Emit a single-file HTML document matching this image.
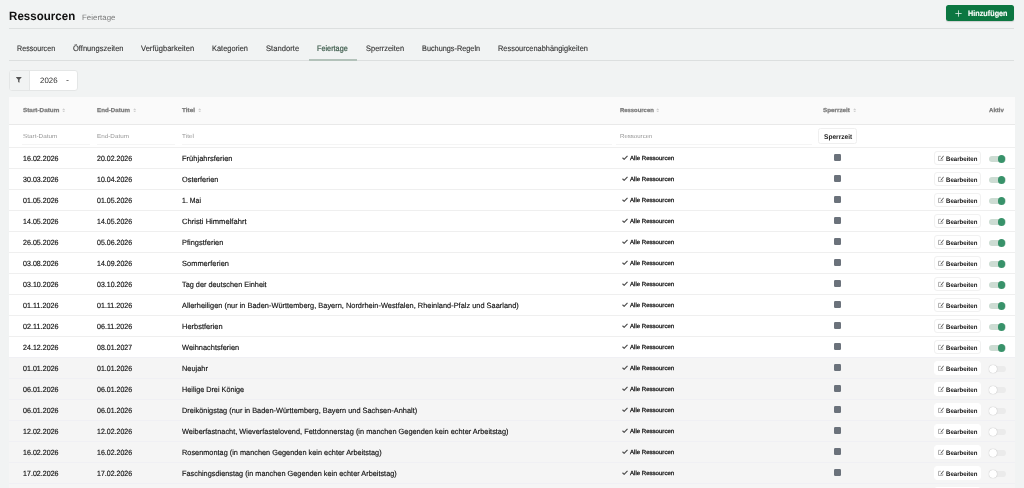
<!DOCTYPE html>
<html lang="de"><head><meta charset="utf-8"><title>Ressourcen</title>
<style>
*{box-sizing:border-box;margin:0;padding:0}
html,body{width:1024px;height:488px;overflow:hidden;background:#f1f3f3;font-family:"Liberation Sans",sans-serif;color:#111}
body{position:relative}
.hd,.btn,.tabs,.filter,.card{will-change:transform}
.x{position:absolute;display:inline-block;white-space:nowrap;transform-origin:0 50%}
.hd{position:absolute;left:0;top:0;width:400px;height:28px}
.title{top:5px;font-size:12px;font-weight:bold;line-height:21.2px;color:#111}
.sub{top:10px;font-size:7.7px;line-height:16px;color:#7a7a7a}
.btn{position:absolute;left:946px;top:5px;width:68px;height:16px;background:#0c7741;border-radius:2.5px;color:#fff;box-shadow:0 1px 1px rgba(0,0,0,.15)}
.btn svg{position:absolute;left:9.2px;top:5px;width:7px;height:7px}
.btn .bt{top:0;font-size:8px;font-weight:bold;line-height:17.8px;color:#fff;-webkit-text-stroke:0.15px #fff}
.hr{position:absolute;left:9px;width:1005px;height:1px;background:#dcdfdf}
.tabs{position:absolute;left:0;top:36px;width:1024px;height:26px;z-index:2}
.tabs .tab{top:0;line-height:26.4px;font-size:8px;color:#333;-webkit-text-stroke:0.12px #333}
.tabs .act{color:#3b5a4a;-webkit-text-stroke:0.2px #3b5a4a}
.tabs .ul{position:absolute;top:22.9px;left:309px;width:47.8px;height:2.3px;background:#b3c2ba}
.filter{position:absolute;left:9px;top:70px;width:68.6px;height:20.6px;border:1px solid #e4e6e6;border-radius:3px;background:#fff;overflow:hidden}
.filter .f{position:absolute;left:0;top:0;width:20px;height:19px;background:#f1f3f3;border-right:1px solid #e4e6e6}
.filter .f svg{position:absolute;left:5.4px;top:4.7px;width:7.6px;height:7.6px}
.filter .y{top:0;line-height:19.4px;font-size:7.8px;color:#333}
.filter .c{position:absolute;left:56.4px;top:8.5px;width:3px;height:1.7px}
.card{position:absolute;left:9px;top:96.7px;width:1005.7px;height:400px;background:#fff}
.th{position:absolute;left:0;top:0;width:100%;height:28px;background:#fafafa;border-bottom:1px solid #e9e9e9;font-size:5.8px;font-weight:bold;color:#7a7a7a}
.th .x{top:0;line-height:27.5px;-webkit-text-stroke:0.25px #7a7a7a}
.th i{position:absolute;top:10.6px;width:3.4px;height:4.6px}
.th i svg{display:block;width:3.4px;height:4.6px}
.fr{position:absolute;left:0;top:28px;width:100%;height:22px;font-size:5.8px;color:#969696}
.fr .x{top:0;line-height:23.7px}
.fr .ln{position:absolute;top:19px;height:1px;background:#f5f5f5}
.fr .sp{position:absolute;left:809.2px;top:3.2px;width:38.6px;height:15.6px;border:1px solid #efefef;border-radius:2.5px;font-size:6.8px;font-weight:bold;color:#1c1c1c;background:#fff}
.fr .sp .x{top:0;line-height:16px}
.row{position:absolute;left:0;width:100%;height:21px;border-top:1px solid #efefef;font-size:7.6px;color:#111}
.row.off{background:#f5f5f5;border-top-color:#f0f0f4}
.row span{position:absolute;white-space:nowrap}
.row .a,.row .b,.row .t{top:0;line-height:21.3px;-webkit-text-stroke:0.15px #111}
.row .r{left:612.5px;top:6.5px;width:6px;height:5px}
.row .r svg{display:block;width:6px;height:5px}
.row .rt{top:0;line-height:20.1px;font-size:5.9px;color:#111;-webkit-text-stroke:0.25px #111}
.row .sq{left:825.2px;top:6.3px;width:6.8px;height:6.8px;background:#6b727b;border-radius:1.2px}
.row .e{left:925px;top:3.3px;width:47.4px;height:14.2px;border:1px solid #f1f1f1;border-radius:3px;background:#fff}
.row.off .e{border-color:#fff}
.row .e svg{position:absolute;left:2.8px;top:2.8px;width:6.2px;height:6.2px}
.row .et{top:0;line-height:13.1px;font-size:6.4px;font-weight:bold;color:#111}
.row .tg{left:980px;top:7.5px;width:16.5px;height:6.5px;border-radius:4px;background:#cddcd3}
.row .tg b{position:absolute;left:8.6px;top:-0.7px;width:7.9px;height:7.9px;border-radius:50%;background:#38926a}
.row.off .tg{background:#ebebeb}
.row.off .tg b{left:0.2px;background:#fff;box-shadow:0 0 1px rgba(0,0,0,.35)}

</style></head><body>
<div class="hd"><span class="x title" style="left:9px;transform:translateY(0.6px) scaleX(0.9633) skewX(0.5deg)">Ressourcen</span><span class="x sub" style="left:82px;transform:scaleX(1.0288) skewX(0.5deg)">Feiertage</span></div>
<div class="btn"><svg viewBox="0 0 8 8"><path d="M4 0.4V7.6M0.4 4H7.6" stroke="#e6f2ea" stroke-width="0.9" fill="none"/></svg><span class="x bt" style="left:21.600000000000023px;transform:scaleX(0.9077) skewX(0.5deg)">Hinzufügen</span></div>
<div class="hr" style="top:28px"></div>
<div class="tabs"><span class="x tab" style="left:17px;transform:scaleX(0.8932) skewX(0.5deg)">Ressourcen</span><span class="x tab" style="left:73px;transform:scaleX(0.9414) skewX(0.5deg)">Öffnungszeiten</span><span class="x tab" style="left:141px;transform:scaleX(0.9479) skewX(0.5deg)">Verfügbarkeiten</span><span class="x tab" style="left:212px;transform:scaleX(0.9283) skewX(0.5deg)">Kategorien</span><span class="x tab" style="left:266px;transform:scaleX(0.9545) skewX(0.5deg)">Standorte</span><span class="x tab act" style="left:317.4px;transform:scaleX(0.9092) skewX(0.5deg)">Feiertage</span><span class="x tab" style="left:366px;transform:scaleX(0.9317) skewX(0.5deg)">Sperrzeiten</span><span class="x tab" style="left:422px;transform:scaleX(0.9138) skewX(0.5deg)">Buchungs-Regeln</span><span class="x tab" style="left:498px;transform:scaleX(0.9274) skewX(0.5deg)">Ressourcenabhängigkeiten</span><div class="ul"></div></div>
<div class="hr" style="top:60px"></div>
<div class="filter"><div class="f"><svg viewBox="0 0 10 10"><path d="M1 1.2H9L5.9 4.8V9L4.1 7.9V4.8Z" fill="#555"/></svg></div><span class="x y" style="left:29.5px;transform:scaleX(1.0150) skewX(0.5deg)">2026</span><svg class="c" viewBox="0 0 6 3.4" preserveAspectRatio="none"><path d="M0 0H6L3 3.4Z" fill="#777"/></svg></div>
<div class="card">
<div class="th"><span class="x " style="left:13.600000000000001px;transform:scaleX(1.0951) skewX(0.5deg)">Start-Datum</span><i style="left:52.6px"><svg viewBox="0 0 34 46" preserveAspectRatio="none"><path d="M17 2L32 19H2Z M17 44L32 27H2Z" fill="#cfcfcf"/></svg></i><span class="x " style="left:88px;transform:scaleX(1.0654) skewX(0.5deg)">End-Datum</span><i style="left:123.6px"><svg viewBox="0 0 34 46" preserveAspectRatio="none"><path d="M17 2L32 19H2Z M17 44L32 27H2Z" fill="#cfcfcf"/></svg></i><span class="x " style="left:173px;transform:scaleX(1.0957) skewX(0.5deg)">Titel</span><i style="left:188.6px"><svg viewBox="0 0 34 46" preserveAspectRatio="none"><path d="M17 2L32 19H2Z M17 44L32 27H2Z" fill="#cfcfcf"/></svg></i><span class="x " style="left:611px;transform:scaleX(1.0169) skewX(0.5deg)">Ressourcen</span><i style="left:647.4px"><svg viewBox="0 0 34 46" preserveAspectRatio="none"><path d="M17 2L32 19H2Z M17 44L32 27H2Z" fill="#cfcfcf"/></svg></i><span class="x " style="left:814px;transform:scaleX(1.0859) skewX(0.5deg)">Sperrzeit</span><i style="left:843.6px"><svg viewBox="0 0 34 46" preserveAspectRatio="none"><path d="M17 2L32 19H2Z M17 44L32 27H2Z" fill="#cfcfcf"/></svg></i><span class="x " style="left:980px;transform:scaleX(1.0534) skewX(0.5deg)">Aktiv</span></div>
<div class="fr"><span class="x " style="left:13.600000000000001px;transform:scaleX(1.0990) skewX(0.5deg)">Start-Datum</span><span class="x " style="left:88px;transform:scaleX(1.0892) skewX(0.5deg)">End-Datum</span><span class="x " style="left:173px;transform:scaleX(1.1109) skewX(0.5deg)">Titel</span><span class="x " style="left:611px;transform:scaleX(1.0487) skewX(0.5deg)">Ressourcen</span><div class="ln" style="left:13px;width:68px"></div><div class="ln" style="left:88px;width:78px"></div><div class="ln" style="left:173px;width:430px"></div><div class="ln" style="left:607px;width:196px"></div><div class="sp"><span class="x " style="left:4.599999999999909px;transform:scaleX(0.9672) skewX(0.5deg)">Sperrzeit</span></div></div>
<div class="row" style="top:50px"><span class="x a" style="left:13.600000000000001px;transform:scaleX(0.9345) skewX(0.5deg)">16.02.2026</span><span class="x b" style="left:88px;transform:scaleX(0.9240) skewX(0.5deg)">20.02.2026</span><span class="x t" style="left:173px;transform:scaleX(0.9891) skewX(0.5deg)">Frühjahrsferien</span><span class="r"><svg viewBox="0 0 12 10"><path d="M1 5.5 L4.3 8.6 L11 1.6" fill="none" stroke="#4a4a4a" stroke-width="2.3"/></svg></span><span class="x rt" style="left:621px;transform:scaleX(1.0289) skewX(0.5deg)">Alle Ressourcen</span><span class="sq"></span><span class="e"><svg viewBox="0 0 12 12"><path d="M9.2 7V10.8H1V2.6H5.6" fill="none" stroke="#8a8a8a" stroke-width="1.3"/><path d="M11 1.4L6 7.6" fill="none" stroke="#505050" stroke-width="1.9"/><path d="M6.4 6.2L4.6 9.2L7.6 7.6Z" fill="#505050"/></svg><span class="x et" style="left:10.700000000000045px;transform:scaleX(0.9519) skewX(0.5deg)">Bearbeiten</span></span><span class="tg"><b></b></span></div>
<div class="row" style="top:71px"><span class="x a" style="left:13.600000000000001px;transform:scaleX(0.9345) skewX(0.5deg)">30.03.2026</span><span class="x b" style="left:88px;transform:scaleX(0.9240) skewX(0.5deg)">10.04.2026</span><span class="x t" style="left:173px;transform:scaleX(0.9697) skewX(0.5deg)">Osterferien</span><span class="r"><svg viewBox="0 0 12 10"><path d="M1 5.5 L4.3 8.6 L11 1.6" fill="none" stroke="#4a4a4a" stroke-width="2.3"/></svg></span><span class="x rt" style="left:621px;transform:scaleX(1.0289) skewX(0.5deg)">Alle Ressourcen</span><span class="sq"></span><span class="e"><svg viewBox="0 0 12 12"><path d="M9.2 7V10.8H1V2.6H5.6" fill="none" stroke="#8a8a8a" stroke-width="1.3"/><path d="M11 1.4L6 7.6" fill="none" stroke="#505050" stroke-width="1.9"/><path d="M6.4 6.2L4.6 9.2L7.6 7.6Z" fill="#505050"/></svg><span class="x et" style="left:10.700000000000045px;transform:scaleX(0.9519) skewX(0.5deg)">Bearbeiten</span></span><span class="tg"><b></b></span></div>
<div class="row" style="top:92px"><span class="x a" style="left:13.600000000000001px;transform:scaleX(0.9345) skewX(0.5deg)">01.05.2026</span><span class="x b" style="left:88px;transform:scaleX(0.9240) skewX(0.5deg)">01.05.2026</span><span class="x t" style="left:173px;transform:scaleX(0.9150) skewX(0.5deg)">1. Mai</span><span class="r"><svg viewBox="0 0 12 10"><path d="M1 5.5 L4.3 8.6 L11 1.6" fill="none" stroke="#4a4a4a" stroke-width="2.3"/></svg></span><span class="x rt" style="left:621px;transform:scaleX(1.0289) skewX(0.5deg)">Alle Ressourcen</span><span class="sq"></span><span class="e"><svg viewBox="0 0 12 12"><path d="M9.2 7V10.8H1V2.6H5.6" fill="none" stroke="#8a8a8a" stroke-width="1.3"/><path d="M11 1.4L6 7.6" fill="none" stroke="#505050" stroke-width="1.9"/><path d="M6.4 6.2L4.6 9.2L7.6 7.6Z" fill="#505050"/></svg><span class="x et" style="left:10.700000000000045px;transform:scaleX(0.9519) skewX(0.5deg)">Bearbeiten</span></span><span class="tg"><b></b></span></div>
<div class="row" style="top:113px"><span class="x a" style="left:13.600000000000001px;transform:scaleX(0.9345) skewX(0.5deg)">14.05.2026</span><span class="x b" style="left:88px;transform:scaleX(0.9240) skewX(0.5deg)">14.05.2026</span><span class="x t" style="left:173px;transform:scaleX(0.9994) skewX(0.5deg)">Christi Himmelfahrt</span><span class="r"><svg viewBox="0 0 12 10"><path d="M1 5.5 L4.3 8.6 L11 1.6" fill="none" stroke="#4a4a4a" stroke-width="2.3"/></svg></span><span class="x rt" style="left:621px;transform:scaleX(1.0289) skewX(0.5deg)">Alle Ressourcen</span><span class="sq"></span><span class="e"><svg viewBox="0 0 12 12"><path d="M9.2 7V10.8H1V2.6H5.6" fill="none" stroke="#8a8a8a" stroke-width="1.3"/><path d="M11 1.4L6 7.6" fill="none" stroke="#505050" stroke-width="1.9"/><path d="M6.4 6.2L4.6 9.2L7.6 7.6Z" fill="#505050"/></svg><span class="x et" style="left:10.700000000000045px;transform:scaleX(0.9519) skewX(0.5deg)">Bearbeiten</span></span><span class="tg"><b></b></span></div>
<div class="row" style="top:134px"><span class="x a" style="left:13.600000000000001px;transform:scaleX(0.9345) skewX(0.5deg)">26.05.2026</span><span class="x b" style="left:88px;transform:scaleX(0.9240) skewX(0.5deg)">05.06.2026</span><span class="x t" style="left:173px;transform:scaleX(0.9788) skewX(0.5deg)">Pfingstferien</span><span class="r"><svg viewBox="0 0 12 10"><path d="M1 5.5 L4.3 8.6 L11 1.6" fill="none" stroke="#4a4a4a" stroke-width="2.3"/></svg></span><span class="x rt" style="left:621px;transform:scaleX(1.0289) skewX(0.5deg)">Alle Ressourcen</span><span class="sq"></span><span class="e"><svg viewBox="0 0 12 12"><path d="M9.2 7V10.8H1V2.6H5.6" fill="none" stroke="#8a8a8a" stroke-width="1.3"/><path d="M11 1.4L6 7.6" fill="none" stroke="#505050" stroke-width="1.9"/><path d="M6.4 6.2L4.6 9.2L7.6 7.6Z" fill="#505050"/></svg><span class="x et" style="left:10.700000000000045px;transform:scaleX(0.9519) skewX(0.5deg)">Bearbeiten</span></span><span class="tg"><b></b></span></div>
<div class="row" style="top:155px"><span class="x a" style="left:13.600000000000001px;transform:scaleX(0.9345) skewX(0.5deg)">03.08.2026</span><span class="x b" style="left:88px;transform:scaleX(0.9240) skewX(0.5deg)">14.09.2026</span><span class="x t" style="left:173px;transform:scaleX(0.9840) skewX(0.5deg)">Sommerferien</span><span class="r"><svg viewBox="0 0 12 10"><path d="M1 5.5 L4.3 8.6 L11 1.6" fill="none" stroke="#4a4a4a" stroke-width="2.3"/></svg></span><span class="x rt" style="left:621px;transform:scaleX(1.0289) skewX(0.5deg)">Alle Ressourcen</span><span class="sq"></span><span class="e"><svg viewBox="0 0 12 12"><path d="M9.2 7V10.8H1V2.6H5.6" fill="none" stroke="#8a8a8a" stroke-width="1.3"/><path d="M11 1.4L6 7.6" fill="none" stroke="#505050" stroke-width="1.9"/><path d="M6.4 6.2L4.6 9.2L7.6 7.6Z" fill="#505050"/></svg><span class="x et" style="left:10.700000000000045px;transform:scaleX(0.9519) skewX(0.5deg)">Bearbeiten</span></span><span class="tg"><b></b></span></div>
<div class="row" style="top:176px"><span class="x a" style="left:13.600000000000001px;transform:scaleX(0.9345) skewX(0.5deg)">03.10.2026</span><span class="x b" style="left:88px;transform:scaleX(0.9240) skewX(0.5deg)">03.10.2026</span><span class="x t" style="left:173px;transform:scaleX(0.9637) skewX(0.5deg)">Tag der deutschen Einheit</span><span class="r"><svg viewBox="0 0 12 10"><path d="M1 5.5 L4.3 8.6 L11 1.6" fill="none" stroke="#4a4a4a" stroke-width="2.3"/></svg></span><span class="x rt" style="left:621px;transform:scaleX(1.0289) skewX(0.5deg)">Alle Ressourcen</span><span class="sq"></span><span class="e"><svg viewBox="0 0 12 12"><path d="M9.2 7V10.8H1V2.6H5.6" fill="none" stroke="#8a8a8a" stroke-width="1.3"/><path d="M11 1.4L6 7.6" fill="none" stroke="#505050" stroke-width="1.9"/><path d="M6.4 6.2L4.6 9.2L7.6 7.6Z" fill="#505050"/></svg><span class="x et" style="left:10.700000000000045px;transform:scaleX(0.9519) skewX(0.5deg)">Bearbeiten</span></span><span class="tg"><b></b></span></div>
<div class="row" style="top:197px"><span class="x a" style="left:13.600000000000001px;transform:scaleX(0.9485) skewX(0.5deg)">01.11.2026</span><span class="x b" style="left:88px;transform:scaleX(0.9379) skewX(0.5deg)">01.11.2026</span><span class="x t" style="left:173px;transform:scaleX(0.9756) skewX(0.5deg)">Allerheiligen (nur in Baden-Württemberg, Bayern, Nordrhein-Westfalen, Rheinland-Pfalz und Saarland)</span><span class="r"><svg viewBox="0 0 12 10"><path d="M1 5.5 L4.3 8.6 L11 1.6" fill="none" stroke="#4a4a4a" stroke-width="2.3"/></svg></span><span class="x rt" style="left:621px;transform:scaleX(1.0289) skewX(0.5deg)">Alle Ressourcen</span><span class="sq"></span><span class="e"><svg viewBox="0 0 12 12"><path d="M9.2 7V10.8H1V2.6H5.6" fill="none" stroke="#8a8a8a" stroke-width="1.3"/><path d="M11 1.4L6 7.6" fill="none" stroke="#505050" stroke-width="1.9"/><path d="M6.4 6.2L4.6 9.2L7.6 7.6Z" fill="#505050"/></svg><span class="x et" style="left:10.700000000000045px;transform:scaleX(0.9519) skewX(0.5deg)">Bearbeiten</span></span><span class="tg"><b></b></span></div>
<div class="row" style="top:218px"><span class="x a" style="left:13.600000000000001px;transform:scaleX(0.9485) skewX(0.5deg)">02.11.2026</span><span class="x b" style="left:88px;transform:scaleX(0.9379) skewX(0.5deg)">06.11.2026</span><span class="x t" style="left:173px;transform:scaleX(0.9818) skewX(0.5deg)">Herbstferien</span><span class="r"><svg viewBox="0 0 12 10"><path d="M1 5.5 L4.3 8.6 L11 1.6" fill="none" stroke="#4a4a4a" stroke-width="2.3"/></svg></span><span class="x rt" style="left:621px;transform:scaleX(1.0289) skewX(0.5deg)">Alle Ressourcen</span><span class="sq"></span><span class="e"><svg viewBox="0 0 12 12"><path d="M9.2 7V10.8H1V2.6H5.6" fill="none" stroke="#8a8a8a" stroke-width="1.3"/><path d="M11 1.4L6 7.6" fill="none" stroke="#505050" stroke-width="1.9"/><path d="M6.4 6.2L4.6 9.2L7.6 7.6Z" fill="#505050"/></svg><span class="x et" style="left:10.700000000000045px;transform:scaleX(0.9519) skewX(0.5deg)">Bearbeiten</span></span><span class="tg"><b></b></span></div>
<div class="row" style="top:239px"><span class="x a" style="left:13.600000000000001px;transform:scaleX(0.9345) skewX(0.5deg)">24.12.2026</span><span class="x b" style="left:88px;transform:scaleX(0.9240) skewX(0.5deg)">08.01.2027</span><span class="x t" style="left:173px;transform:scaleX(0.9774) skewX(0.5deg)">Weihnachtsferien</span><span class="r"><svg viewBox="0 0 12 10"><path d="M1 5.5 L4.3 8.6 L11 1.6" fill="none" stroke="#4a4a4a" stroke-width="2.3"/></svg></span><span class="x rt" style="left:621px;transform:scaleX(1.0289) skewX(0.5deg)">Alle Ressourcen</span><span class="sq"></span><span class="e"><svg viewBox="0 0 12 12"><path d="M9.2 7V10.8H1V2.6H5.6" fill="none" stroke="#8a8a8a" stroke-width="1.3"/><path d="M11 1.4L6 7.6" fill="none" stroke="#505050" stroke-width="1.9"/><path d="M6.4 6.2L4.6 9.2L7.6 7.6Z" fill="#505050"/></svg><span class="x et" style="left:10.700000000000045px;transform:scaleX(0.9519) skewX(0.5deg)">Bearbeiten</span></span><span class="tg"><b></b></span></div>
<div class="row off" style="top:260px"><span class="x a" style="left:13.600000000000001px;transform:scaleX(0.9345) skewX(0.5deg)">01.01.2026</span><span class="x b" style="left:88px;transform:scaleX(0.9240) skewX(0.5deg)">01.01.2026</span><span class="x t" style="left:173px;transform:scaleX(0.9748) skewX(0.5deg)">Neujahr</span><span class="r"><svg viewBox="0 0 12 10"><path d="M1 5.5 L4.3 8.6 L11 1.6" fill="none" stroke="#4a4a4a" stroke-width="2.3"/></svg></span><span class="x rt" style="left:621px;transform:scaleX(1.0289) skewX(0.5deg)">Alle Ressourcen</span><span class="sq"></span><span class="e"><svg viewBox="0 0 12 12"><path d="M9.2 7V10.8H1V2.6H5.6" fill="none" stroke="#8a8a8a" stroke-width="1.3"/><path d="M11 1.4L6 7.6" fill="none" stroke="#505050" stroke-width="1.9"/><path d="M6.4 6.2L4.6 9.2L7.6 7.6Z" fill="#505050"/></svg><span class="x et" style="left:10.700000000000045px;transform:scaleX(0.9519) skewX(0.5deg)">Bearbeiten</span></span><span class="tg"><b></b></span></div>
<div class="row off" style="top:281px"><span class="x a" style="left:13.600000000000001px;transform:scaleX(0.9345) skewX(0.5deg)">06.01.2026</span><span class="x b" style="left:88px;transform:scaleX(0.9240) skewX(0.5deg)">06.01.2026</span><span class="x t" style="left:173px;transform:scaleX(0.9555) skewX(0.5deg)">Heilige Drei Könige</span><span class="r"><svg viewBox="0 0 12 10"><path d="M1 5.5 L4.3 8.6 L11 1.6" fill="none" stroke="#4a4a4a" stroke-width="2.3"/></svg></span><span class="x rt" style="left:621px;transform:scaleX(1.0289) skewX(0.5deg)">Alle Ressourcen</span><span class="sq"></span><span class="e"><svg viewBox="0 0 12 12"><path d="M9.2 7V10.8H1V2.6H5.6" fill="none" stroke="#8a8a8a" stroke-width="1.3"/><path d="M11 1.4L6 7.6" fill="none" stroke="#505050" stroke-width="1.9"/><path d="M6.4 6.2L4.6 9.2L7.6 7.6Z" fill="#505050"/></svg><span class="x et" style="left:10.700000000000045px;transform:scaleX(0.9519) skewX(0.5deg)">Bearbeiten</span></span><span class="tg"><b></b></span></div>
<div class="row off" style="top:302px"><span class="x a" style="left:13.600000000000001px;transform:scaleX(0.9345) skewX(0.5deg)">06.01.2026</span><span class="x b" style="left:88px;transform:scaleX(0.9240) skewX(0.5deg)">06.01.2026</span><span class="x t" style="left:173px;transform:scaleX(0.9722) skewX(0.5deg)">Dreikönigstag (nur in Baden-Württemberg, Bayern und Sachsen-Anhalt)</span><span class="r"><svg viewBox="0 0 12 10"><path d="M1 5.5 L4.3 8.6 L11 1.6" fill="none" stroke="#4a4a4a" stroke-width="2.3"/></svg></span><span class="x rt" style="left:621px;transform:scaleX(1.0289) skewX(0.5deg)">Alle Ressourcen</span><span class="sq"></span><span class="e"><svg viewBox="0 0 12 12"><path d="M9.2 7V10.8H1V2.6H5.6" fill="none" stroke="#8a8a8a" stroke-width="1.3"/><path d="M11 1.4L6 7.6" fill="none" stroke="#505050" stroke-width="1.9"/><path d="M6.4 6.2L4.6 9.2L7.6 7.6Z" fill="#505050"/></svg><span class="x et" style="left:10.700000000000045px;transform:scaleX(0.9519) skewX(0.5deg)">Bearbeiten</span></span><span class="tg"><b></b></span></div>
<div class="row off" style="top:323px"><span class="x a" style="left:13.600000000000001px;transform:scaleX(0.9345) skewX(0.5deg)">12.02.2026</span><span class="x b" style="left:88px;transform:scaleX(0.9240) skewX(0.5deg)">12.02.2026</span><span class="x t" style="left:173px;transform:scaleX(0.9722) skewX(0.5deg)">Weiberfastnacht, Wieverfastelovend, Fettdonnerstag (in manchen Gegenden kein echter Arbeitstag)</span><span class="r"><svg viewBox="0 0 12 10"><path d="M1 5.5 L4.3 8.6 L11 1.6" fill="none" stroke="#4a4a4a" stroke-width="2.3"/></svg></span><span class="x rt" style="left:621px;transform:scaleX(1.0289) skewX(0.5deg)">Alle Ressourcen</span><span class="sq"></span><span class="e"><svg viewBox="0 0 12 12"><path d="M9.2 7V10.8H1V2.6H5.6" fill="none" stroke="#8a8a8a" stroke-width="1.3"/><path d="M11 1.4L6 7.6" fill="none" stroke="#505050" stroke-width="1.9"/><path d="M6.4 6.2L4.6 9.2L7.6 7.6Z" fill="#505050"/></svg><span class="x et" style="left:10.700000000000045px;transform:scaleX(0.9519) skewX(0.5deg)">Bearbeiten</span></span><span class="tg"><b></b></span></div>
<div class="row off" style="top:344px"><span class="x a" style="left:13.600000000000001px;transform:scaleX(0.9345) skewX(0.5deg)">16.02.2026</span><span class="x b" style="left:88px;transform:scaleX(0.9240) skewX(0.5deg)">16.02.2026</span><span class="x t" style="left:173px;transform:scaleX(0.9671) skewX(0.5deg)">Rosenmontag (in manchen Gegenden kein echter Arbeitstag)</span><span class="r"><svg viewBox="0 0 12 10"><path d="M1 5.5 L4.3 8.6 L11 1.6" fill="none" stroke="#4a4a4a" stroke-width="2.3"/></svg></span><span class="x rt" style="left:621px;transform:scaleX(1.0289) skewX(0.5deg)">Alle Ressourcen</span><span class="sq"></span><span class="e"><svg viewBox="0 0 12 12"><path d="M9.2 7V10.8H1V2.6H5.6" fill="none" stroke="#8a8a8a" stroke-width="1.3"/><path d="M11 1.4L6 7.6" fill="none" stroke="#505050" stroke-width="1.9"/><path d="M6.4 6.2L4.6 9.2L7.6 7.6Z" fill="#505050"/></svg><span class="x et" style="left:10.700000000000045px;transform:scaleX(0.9519) skewX(0.5deg)">Bearbeiten</span></span><span class="tg"><b></b></span></div>
<div class="row off" style="top:365px"><span class="x a" style="left:13.600000000000001px;transform:scaleX(0.9345) skewX(0.5deg)">17.02.2026</span><span class="x b" style="left:88px;transform:scaleX(0.9240) skewX(0.5deg)">17.02.2026</span><span class="x t" style="left:173px;transform:scaleX(0.9652) skewX(0.5deg)">Faschingsdienstag (in manchen Gegenden kein echter Arbeitstag)</span><span class="r"><svg viewBox="0 0 12 10"><path d="M1 5.5 L4.3 8.6 L11 1.6" fill="none" stroke="#4a4a4a" stroke-width="2.3"/></svg></span><span class="x rt" style="left:621px;transform:scaleX(1.0289) skewX(0.5deg)">Alle Ressourcen</span><span class="sq"></span><span class="e"><svg viewBox="0 0 12 12"><path d="M9.2 7V10.8H1V2.6H5.6" fill="none" stroke="#8a8a8a" stroke-width="1.3"/><path d="M11 1.4L6 7.6" fill="none" stroke="#505050" stroke-width="1.9"/><path d="M6.4 6.2L4.6 9.2L7.6 7.6Z" fill="#505050"/></svg><span class="x et" style="left:10.700000000000045px;transform:scaleX(0.9519) skewX(0.5deg)">Bearbeiten</span></span><span class="tg"><b></b></span></div>
<div class="row off" style="top:386px"><span class="sq"></span><span class="e"><svg viewBox="0 0 12 12"><path d="M9.2 7V10.8H1V2.6H5.6" fill="none" stroke="#8a8a8a" stroke-width="1.3"/><path d="M11 1.4L6 7.6" fill="none" stroke="#505050" stroke-width="1.9"/><path d="M6.4 6.2L4.6 9.2L7.6 7.6Z" fill="#505050"/></svg><span class="x et" style="left:10.700000000000045px;transform:scaleX(0.9519) skewX(0.5deg)">Bearbeiten</span></span><span class="tg"><b></b></span></div>
</div>
</body></html>
